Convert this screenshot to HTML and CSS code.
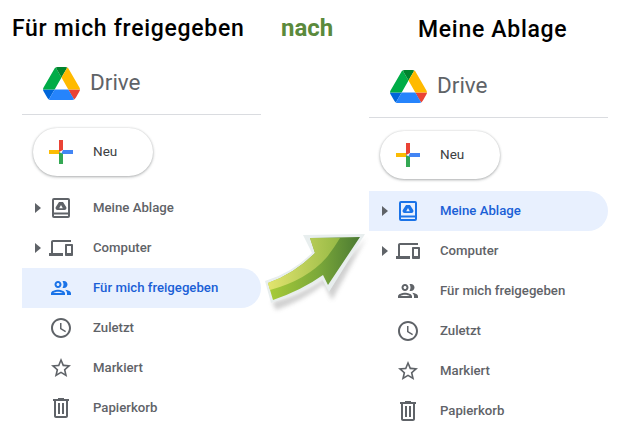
FILE: index.html
```html
<!DOCTYPE html>
<html lang="de">
<head>
    <meta charset="UTF-8">
    <title>Für mich freigegeben nach Meine Ablage</title>
    <link rel="stylesheet" href="styles.css">
</head>
<body>
    <svg class="defs" width="0" height="0">
        <symbol id="logo" viewBox="0 0 87.3 78">
            <path d="m6.6 66.85 3.85 6.65c.8 1.4 1.95 2.5 3.3 3.3l13.75-23.8h-27.5c0 1.55.4 3.1 1.2 4.5z" fill="#0066da"/>
            <path d="m43.65 25-13.75-23.8c-1.35.8-2.5 1.9-3.3 3.3l-25.4 44a9.06 9.06 0 0 0 -1.2 4.5h27.5z" fill="#00ac47"/>
            <path d="m73.55 76.8c1.35-.8 2.5-1.9 3.3-3.3l1.6-2.75 7.65-13.25c.8-1.4 1.2-2.95 1.2-4.5h-27.502l5.852 11.5z" fill="#ea4335"/>
            <path d="m43.65 25 13.75-23.8c-1.35-.8-2.9-1.2-4.5-1.2h-18.5c-1.6 0-3.15.45-4.5 1.2z" fill="#00832d"/>
            <path d="m59.8 53h-32.3l-13.75 23.8c1.35.8 2.9 1.2 4.5 1.2h50.8c1.6 0 3.15-.45 4.5-1.2z" fill="#2684fc"/>
            <path d="m73.4 26.5-12.7-22c-.8-1.4-1.95-2.5-3.3-3.3l-13.75 23.8 16.15 28h27.45c0-1.55-.4-3.1-1.2-4.5z" fill="#ffba00"/>
        </symbol>
        <symbol id="plus" viewBox="0 0 24 24">
            <path d="M10 0h4v10l-4 2z" fill="#ea4335"/>
            <path d="M14 10h10v4H12z" fill="#4285f4"/>
            <path d="M10 12l4 2v10h-4z" fill="#34a853"/>
            <path d="M0 10h10v4H0z" fill="#fbbc04"/>
        </symbol>
        <symbol id="book" viewBox="0 0 24 24">
            <path fill-rule="evenodd" d="M5 2h14a2 2 0 0 1 2 2v16a2 2 0 0 1-2 2H5a2 2 0 0 1-2-2V4a2 2 0 0 1 2-2zm0 2v12.500h14V4zm0 14.500V20h14v-1.500zM8.500 14a2 2 0 0 1-1.700-3L10 6h4l3.200 5a2 2 0 0 1-1.700 3zm1.700-1.800h3.600L12 9z"/>
        </symbol>
        <symbol id="devices" viewBox="0 0 24 24">
            <path d="M4 6h18V4H4c-1.100 0-2 .9-2 2v11H0v3h14v-3H4V6zm19 2h-6c-.55 0-1 .45-1 1v10c0 .55.45 1 1 1h6c.55 0 1-.45 1-1V9c0-.55-.45-1-1-1zm-1 9h-4v-7h4v7z"/>
        </symbol>
        <symbol id="people" viewBox="0 0 24 24">
            <path d="M9 13.750c-2.340 0-7 1.170-7 3.500V19h14v-1.750c0-2.330-4.660-3.500-7-3.500zM4.340 17c.84-.58 2.870-1.250 4.660-1.250s3.820.67 4.660 1.250H4.340zM9 12c1.930 0 3.500-1.570 3.500-3.500S10.930 5 9 5 5.500 6.570 5.500 8.500 7.070 12 9 12zm0-5c.83 0 1.500.67 1.500 1.500S9.830 10 9 10s-1.500-.67-1.500-1.500S8.170 7 9 7zm7.040 6.810c1.160.84 1.960 1.960 1.960 3.440V19h4v-1.750c0-2.020-3.500-3.170-5.960-3.440zM15 12c1.930 0 3.500-1.570 3.500-3.500S16.930 5 15 5c-.54 0-1.040.13-1.500.35.63.89 1 1.980 1 3.150s-.37 2.260-1 3.150c.46.22.96.35 1.500.35z"/>
        </symbol>
        <symbol id="clock" viewBox="0 0 24 24">
            <path d="M11.990 2C6.470 2 2 6.480 2 12s4.470 10 9.990 10C17.520 22 22 17.520 22 12S17.520 2 11.990 2zM12 20c-4.420 0-8-3.580-8-8s3.580-8 8-8 8 3.580 8 8-3.580 8-8 8zm.5-13H11v6l5.250 3.150.75-1.230-4.500-2.670z"/>
        </symbol>
        <symbol id="star" viewBox="0 0 24 24">
            <path d="M22 9.240l-7.190-.62L12 2 9.190 8.630 2 9.240l5.460 4.730L5.820 21 12 17.270 18.180 21l-1.630-7.030L22 9.240zM12 15.400l-3.760 2.270 1-4.280-3.320-2.880 4.380-.38L12 6.100l1.710 4.040 4.380.38-3.320 2.880 1 4.280L12 15.400z"/>
        </symbol>
        <symbol id="trash" viewBox="0 0 24 24">
            <path d="M15 3V2H9v1H4v2h1v15c0 1.100.9 2 2 2h10c1.100 0 2-.9 2-2V5h1V3h-5zm2 17H7V5h10v15zM9 7h2v11H9zm4 0h2v11h-2z"/>
        </symbol>
    </svg>

    <div class="page">
        <div class="panel">
            <h1 class="title title-left">Für mich freigegeben</h1>
            <div class="brand">
                <svg class="logo"><use href="#logo"/></svg>
                <span class="brand-name">Drive</span>
            </div>
            <button class="new-btn"><svg class="plus"><use href="#plus"/></svg>Neu</button>
            <ul class="nav">
                <li class="nav-item"><span class="caret"></span><svg class="icon"><use href="#book"/></svg>Meine Ablage</li>
                <li class="nav-item"><span class="caret"></span><svg class="icon"><use href="#devices"/></svg>Computer</li>
                <li class="nav-item active"><span class="no-caret"></span><svg class="icon"><use href="#people"/></svg>Für mich freigegeben</li>
                <li class="nav-item"><span class="no-caret"></span><svg class="icon"><use href="#clock"/></svg>Zuletzt</li>
                <li class="nav-item"><span class="no-caret"></span><svg class="icon"><use href="#star"/></svg>Markiert</li>
                <li class="nav-item"><span class="no-caret"></span><svg class="icon"><use href="#trash"/></svg>Papierkorb</li>
            </ul>
        </div>

        <div class="between">
            <div class="nach">nach</div>
        </div>

        <div class="panel panel-right">
            <h1 class="title title-right">Meine Ablage</h1>
            <div class="brand">
                <svg class="logo"><use href="#logo"/></svg>
                <span class="brand-name">Drive</span>
            </div>
            <button class="new-btn"><svg class="plus"><use href="#plus"/></svg>Neu</button>
            <ul class="nav">
                <li class="nav-item active"><span class="caret"></span><svg class="icon"><use href="#book"/></svg>Meine Ablage</li>
                <li class="nav-item"><span class="caret"></span><svg class="icon"><use href="#devices"/></svg>Computer</li>
                <li class="nav-item"><span class="no-caret"></span><svg class="icon"><use href="#people"/></svg>Für mich freigegeben</li>
                <li class="nav-item"><span class="no-caret"></span><svg class="icon"><use href="#clock"/></svg>Zuletzt</li>
                <li class="nav-item"><span class="no-caret"></span><svg class="icon"><use href="#star"/></svg>Markiert</li>
                <li class="nav-item"><span class="no-caret"></span><svg class="icon"><use href="#trash"/></svg>Papierkorb</li>
            </ul>
        </div>
    </div>

    <!-- Pfeil liegt über den beiden Spalten -->
    <svg class="arrow" viewBox="0 0 110 100" width="110" height="100">
        <defs>
            <linearGradient id="arrowDark" x1="0" y1="0" x2="1" y2="0">
                <stop offset="0" stop-color="#a8cc38"/>
                <stop offset="0.55" stop-color="#7ba83a"/>
                <stop offset="1" stop-color="#4b7a32"/>
            </linearGradient>
            <linearGradient id="arrowLight" x1="0" y1="0" x2="1" y2="0">
                <stop offset="0" stop-color="#e2e46e"/>
                <stop offset="1" stop-color="#96b945"/>
            </linearGradient>
            <filter id="arrowBlur"><feGaussianBlur stdDeviation="2"/></filter>
        </defs>
        <path d="M10 76 L14 84 Q42 74 62 58 L70 74 L104 12 L92 26 L60 54 Q36 70 10 76z" fill="#999" opacity="0.45" filter="url(#arrowBlur)"/>
        <path d="M3 55 L9 77 Q40 67 60 53 L67 66 L103 8 L41 9 L50 27 Q30 47 3 55z" fill="#e8eeee"/>
        <path d="M6 57 L11 74 Q40 64 61 49 L66 59 L98 11 L48 12 L53 27 Q32 48 6 57z" fill="url(#arrowDark)"/>
        <path d="M6 57 L8 64 Q45 54 65 31 Q72 22 78 12 L48 12 L53 27 Q32 48 6 57z" fill="url(#arrowLight)"/>
    </svg>
</body>
</html>
```

FILE: styles.css
```css
body {
    margin: 0;
    width: 633px;
    height: 425px;
    overflow: hidden;
    position: relative;
    background-color: white;
    font-family: Roboto, Arial, sans-serif;
    color: #5f6368;
}

.defs {
    position: absolute;
}

.page {
    display: flex;
    padding-left: 22px;
}

.panel {
    width: 239px;
    flex-shrink: 0;
}

.panel-right {
    padding-top: 1px;
}

.between {
    width: 108px;
    flex-shrink: 0;
}

.nach {
    margin: 15px 0 0 20px;
    font-family: Roboto, Arial, sans-serif;
    font-size: 24px;
    font-weight: bold;
    line-height: 26px;
    color: #5b8a3c;
}

.title {
    margin: 0;
    height: 58px;
    box-sizing: border-box;
    padding-top: 15px;
    font-family: Roboto, Arial, sans-serif;
    font-size: 23px;
    font-weight: 500;
    line-height: 28px;
    letter-spacing: 0.7px;
    color: black;
    white-space: nowrap;
}

.title-left {
    margin-left: -10px;
}

.title-right {
    height: 60px;
    margin-left: 49px;
}

.brand {
    display: flex;
    align-items: center;
    height: 57px;
    box-sizing: border-box;
    padding: 0 0 6px 21px;
    border-bottom: 1px solid #dadce0;
}

.logo {
    width: 37px;
    height: 33px;
}

.brand-name {
    margin: 0 0 3px 10px;
    font-size: 22.5px;
    color: #5f6368;
}

.new-btn {
    display: flex;
    align-items: center;
    width: 120px;
    height: 48px;
    margin: 13px 0 12px 11px;
    padding: 0 0 2px 16px;
    border: none;
    border-radius: 24px;
    background-color: white;
    box-shadow: 0 1px 3px rgba(60, 64, 67, 0.4), 0 0 2px rgba(60, 64, 67, 0.15);
    font-family: Roboto, Arial, sans-serif;
    font-size: 13.5px;
    font-weight: 400;
    color: #3c4043;
}

.plus {
    width: 24px;
    height: 24px;
    margin: 2px 20px 0 0;
}

.nav {
    list-style: none;
    margin: 0;
    padding: 0;
}

.nav-item {
    display: flex;
    align-items: center;
    height: 40px;
    padding: 0 0 2px 13px;
    box-sizing: border-box;
    border-radius: 0 20px 20px 0;
    font-size: 13.2px;
    font-weight: 500;
}

.nav-item.active {
    background-color: #e8f0fe;
    color: #1a5fd6;
}

.caret {
    width: 0;
    height: 0;
    margin: 2px 8px 0 0;
    border-style: solid;
    border-width: 5px 0 5px 6px;
    border-color: transparent transparent transparent #5f6368;
}

.no-caret {
    width: 14px;
}

.icon {
    width: 24px;
    height: 24px;
    margin: 2px 20px 0 0;
    fill: #5f6368;
}

.active .icon {
    fill: #1a73e8;
}

.arrow {
    position: absolute;
    left: 262px;
    top: 226px;
}
```
